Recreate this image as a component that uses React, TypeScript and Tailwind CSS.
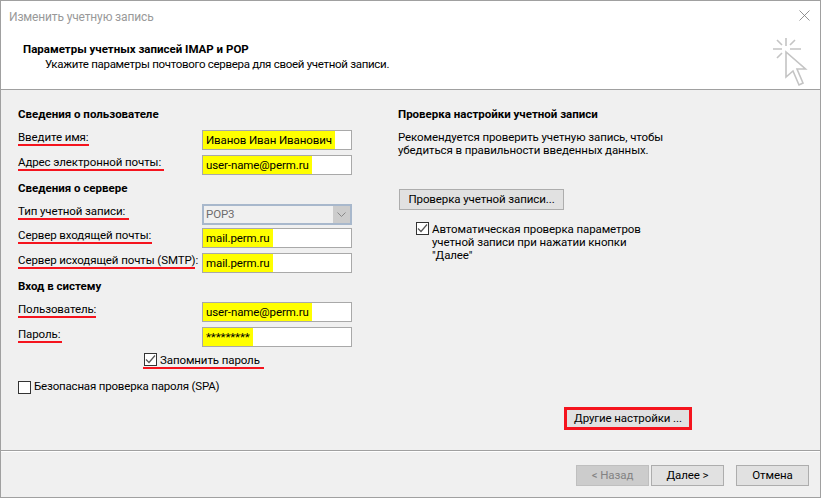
import type { ReactNode } from "react";

function CheckBox({ checked }: { checked?: boolean }) {
  return (
    <span className="flex h-[13px] w-[13px] shrink-0 items-center justify-center border border-[#333] bg-white">
      {checked && (
        <svg width="11" height="11" viewBox="0 0 11 11" fill="none">
          <path d="M1 5.5l3 3 6-7" stroke="#555" strokeWidth="1.2" />
        </svg>
      )}
    </span>
  );
}

function Label({ children, width }: { children: ReactNode; width: string }) {
  return (
    <div className={`h-[16px] shrink-0 border-b-2 border-[#f5141e] leading-[14px] whitespace-nowrap ${width}`}>
      {children}
    </div>
  );
}

function Field({ value }: { value: string }) {
  return (
    <div className="flex h-[20px] w-[150px] border border-[#a9a9a9] bg-white">
      <span className="h-full bg-[#ffff00] px-[3px] leading-[18px] whitespace-nowrap">{value}</span>
    </div>
  );
}

function Row({ label, width, value }: { label: string; width: string; value: string }) {
  return (
    <div className="flex h-[25px] items-start justify-between">
      <Label width={width}>{label}</Label>
      <Field value={value} />
    </div>
  );
}

function Button({ children, className }: { children: ReactNode; className: string }) {
  return (
    <div className={`flex h-[21px] items-center justify-center border whitespace-nowrap ${className}`}>
      {children}
    </div>
  );
}

export default function App() {
  return (
    <div className="flex h-[498px] w-[821px] flex-col border border-[#a0a0a0] bg-white font-['Roboto',sans-serif] text-[11.5px] tracking-[-0.1px] text-black">
      {/* title + header */}
      <div className="flex h-[89px] shrink-0 flex-col border-b border-[#a0a0a0] bg-white">
        <div className="flex h-[32px] items-center justify-between pr-[10px] pl-[8px]">
          <span className="text-[12px] tracking-[-0.15px] text-[#999]">Изменить учетную запись</span>
          <svg width="11" height="11" viewBox="0 0 11 11" fill="none" className="mb-[4px]">
            <path d="M0.5 0.5l10 10M10.5 0.5l-10 10" stroke="#777" strokeWidth="0.8" />
          </svg>
        </div>
        <div className="flex items-start justify-between pr-[11px] pl-[22px]">
          <div className="pt-[9px]">
            <div className="leading-[14px] font-bold tracking-normal">Параметры учетных записей IMAP и POP</div>
            <div className="pl-[22px] leading-[16px] tracking-[-0.3px]">Укажите параметры почтового сервера для своей учетной записи.</div>
          </div>
          <svg width="36" height="52" viewBox="0 0 36 52" fill="none" stroke="#c4c4c4" strokeWidth="1.6" className="mt-[3px]">
            <path d="M13 2v8M0 13h9M17 13h11M4 4l5 5M22 4l-5 5M4 22l5-5" />
            <path d="M13 16v25l7-6 6 14 4-2-6-14h8.500z" />
          </svg>
        </div>
      </div>

      {/* body */}
      <div className="flex h-[360px] shrink-0 bg-[#f0f0f0]">
        <div className="w-[351px] shrink-0 pl-[17px]">
          <div className="h-[40px] pt-[16px] leading-[16px] font-bold tracking-normal">Сведения о пользователе</div>
          <Row label="Введите имя:" width="w-[71px]" value="Иванов Иван Иванович" />
          <Row label="Адрес электронной почты:" width="w-[146px]" value="user-name@perm.ru" />
          <div className="h-[24px] leading-[16px] font-bold tracking-normal">Сведения о сервере</div>
          <div className="flex h-[24px] items-start justify-between">
            <Label width="w-[111px]">Тип учетной записи:</Label>
            <div className="flex h-[21px] w-[150px] items-center justify-between border-2 border-[#a8b8cc] bg-[#f0f0f0] pl-[2px]">
              <span className="text-[#6d6d6d]">POP3</span>
              <span className="flex h-full w-[17px] items-center justify-center bg-[#cccccc]">
                <svg width="9" height="5" viewBox="0 0 9 5" fill="none">
                  <path d="M0.5 0.5l4 4 4-4" stroke="#888" />
                </svg>
              </span>
            </div>
          </div>
          <Row label="Сервер входящей почты:" width="w-[134px]" value="mail.perm.ru" />
          <Row label="Сервер исходящей почты (SMTP):" width="w-[177px]" value="mail.perm.ru" />
          <div className="h-[24px] leading-[16px] font-bold tracking-normal">Вход в систему</div>
          <Row label="Пользователь:" width="w-[78px]" value="user-name@perm.ru" />
          <Row label="Пароль:" width="w-[44px]" value="*********" />
          <div className="ml-[125px] flex h-[17px] w-[121px] items-center gap-[3px] border-b-2 border-[#f5141e] pl-[1px]">
            <CheckBox checked />
            <span className="leading-[14px] whitespace-nowrap">Запомнить пароль</span>
          </div>
          <div className="mt-[11px] flex h-[14px] items-center gap-[3px]">
            <CheckBox />
            <span className="tracking-[-0.18px] whitespace-nowrap">Безопасная проверка пароля (SPA)</span>
          </div>
        </div>

        <div className="flex flex-1 flex-col pl-[46px]">
          <div className="h-[41px] pt-[16px] leading-[16px] font-bold tracking-normal">Проверка настройки учетной записи</div>
          <div className="h-[58px] leading-[13px]">
            Рекомендуется проверить учетную запись, чтобы
            <br />
            убедиться в правильности введенных данных.
          </div>
          <Button className="ml-[1px] w-[165px] border-[#adadad] bg-[#e1e1e1]">Проверка учетной записи...</Button>
          <div className="mt-[12px] ml-[18px] flex gap-[3px]">
            <CheckBox checked />
            <div className="pt-[1px] leading-[13px]">
              Автоматическая проверка параметров
              <br />
              учетной записи при нажатии кнопки
              <br />
              "Далее"
            </div>
          </div>
          <div className="mt-[145px] ml-[166px] flex h-[23px] w-[128px] items-center justify-center border-[3px] border-[#f5141e] bg-[#e1e1e1] whitespace-nowrap">
            Другие настройки ...
          </div>
        </div>
      </div>

      {/* footer */}
      <div className="flex flex-1 justify-end border-t border-[#a0a0a0] bg-[#f0f0f0] pt-[14px] pr-[11px] shadow-[inset_0_1px_0_#ffffff]">
        <Button className="w-[73px] border-[#bfbfbf] bg-[#cccccc] text-[#838383]">&lt; Назад</Button>
        <Button className="ml-[2px] w-[73px] border-[#adadad] bg-[#e1e1e1]">Далее &gt;</Button>
        <Button className="ml-[12px] w-[73px] border-[#adadad] bg-[#e1e1e1]">Отмена</Button>
      </div>
    </div>
  );
}
